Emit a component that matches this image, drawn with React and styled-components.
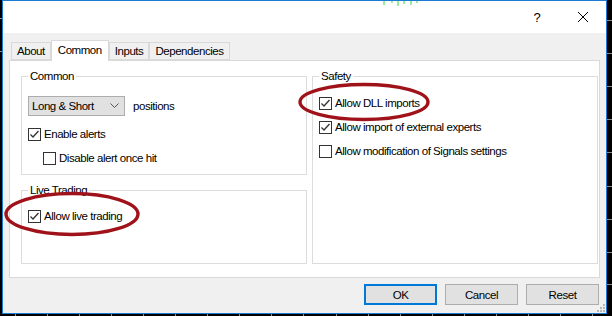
import React from "react";
import styled, { createGlobalStyle } from "styled-components";

const Global = createGlobalStyle`
    html, body {
        margin: 0;
        padding: 0;
        background: #000;
    }
    body {
        font-family: "Liberation Sans", Arial, sans-serif;
        font-size: 11.5px;
        letter-spacing: -0.45px;
        color: #000;
    }
`;

const Screen = styled.div`
    width: 612px;
    height: 316px;
    padding-left: 2px;
    box-sizing: border-box;
    position: relative;
    overflow: hidden;
`;

// chart axis ticks that show round the dialog
const Backdrop = styled.svg`
    position: absolute;
    left: 0;
    top: 0;
`;

const Window = styled.div`
    position: relative;
    width: 605px;
    height: 314px;
    box-sizing: border-box;
    border: 1px solid #1a7ad4;
    background: #f0f0f0;
    display: flex;
    flex-direction: column;
`;

const TitleBar = styled.div`
    height: 32px;
    background: #fff;
    display: flex;
    align-items: center;
    justify-content: flex-end;
    gap: 32px;
    padding-right: 16px;
`;

const TitleButton = styled.div`
    width: 14px;
    height: 14px;
    display: flex;
    align-items: center;
    justify-content: center;
    font-size: 13px;
`;

const Body = styled.div`
    flex: 1;
    display: flex;
    flex-direction: column;
    padding: 7px 6px 0 6px;
`;

const TabStrip = styled.div`
    display: flex;
    align-items: flex-end;
    height: 20px;
    padding-left: 2px;
    position: relative;
    z-index: 1;
`;

const Tab = styled.div`
    box-sizing: border-box;
    height: ${(p) => (p.$active ? "21px" : "18px")};
    margin-bottom: ${(p) => (p.$active ? "-1px" : "0")};
    padding: ${(p) => (p.$active ? "1px 6px 0" : "0 5px")};
    border: 1px solid #d9d9d9;
    border-bottom: ${(p) => (p.$active ? "none" : "1px solid #d9d9d9")};
    background: ${(p) => (p.$active ? "#fff" : "#f0f0f0")};
    display: flex;
    align-items: ${(p) => (p.$active ? "flex-start" : "center")};
    line-height: 16px;
    & + & {
        border-left: ${(p) => (p.$active ? "1px solid #d9d9d9" : "none")};
    }
`;

const Panel = styled.div`
    height: 218px;
    box-sizing: border-box;
    background: #fff;
    border: 1px solid #d9d9d9;
    display: grid;
    grid-template-columns: 286px 286px;
    column-gap: 5px;
    align-content: start;
    padding: 7px 0 0 11px;
`;

const Column = styled.div`
    display: flex;
    flex-direction: column;
    gap: 7px;
`;

const Group = styled.fieldset`
    margin: 0;
    box-sizing: border-box;
    height: ${(p) => p.$h}px;
    border: 1px solid #dcdcdc;
    padding: ${(p) => p.$pt}px 0 0 6px;
    display: flex;
    flex-direction: column;
    gap: 8px;
    min-width: 0;
`;

const Legend = styled.legend`
    padding: 0 2px;
    margin-left: 0;
    line-height: 16px;
`;

const Row = styled.div`
    display: flex;
    align-items: center;
    gap: 8px;
    height: 20px;
    margin-bottom: 2px;
`;

const Select = styled.div`
    width: 97px;
    height: 20px;
    box-sizing: border-box;
    background: #e1e1e1;
    border: 1px solid #adadad;
    display: flex;
    align-items: center;
    justify-content: space-between;
    padding: 0 5px 0 3px;
`;

const CheckLabel = styled.label`
    display: flex;
    align-items: center;
    gap: 3px;
    padding-left: ${(p) => p.$indent || 0}px;
    height: 16px;
`;

const Box = styled.span`
    width: 13px;
    height: 13px;
    box-sizing: border-box;
    border: 1px solid #333;
    background: #fff;
    display: flex;
    align-items: center;
    justify-content: center;
`;

const Footer = styled.div`
    display: flex;
    justify-content: flex-end;
    gap: 8px;
    padding: 6px 1px 0 0;
`;

const Button = styled.button`
    width: 73px;
    height: 21px;
    box-sizing: border-box;
    background: #e1e1e1;
    border: ${(p) => (p.$default ? "2px solid #0078d7" : "1px solid #adadad")};
    font: inherit;
    letter-spacing: inherit;
    color: #000;
    padding: 0;
`;

const Grip = styled.svg`
    position: absolute;
    right: 1px;
    bottom: 1px;
`;

const Marker = styled.svg`
    position: absolute;
    left: 0;
    top: 0;
    pointer-events: none;
`;

const Check = ({ checked, children, indent }) => (
    <CheckLabel $indent={indent}>
        <Box>
            {checked && (
                <svg width="11" height="11" viewBox="0 0 11 11">
                    <path d="M1.5 5.5 L4 8 L9.5 2" fill="none" stroke="#333" strokeWidth="1.3" />
                </svg>
            )}
        </Box>
        {children}
    </CheckLabel>
);

const rightTicks = [20, 53, 86, 119, 152, 186, 219, 252, 284];
const bottomTicks = [15, 47, 79, 111, 143, 175, 207, 239, 271, 303, 336, 368, 400, 432, 464, 496, 528, 560, 592];

export default function App() {
    return (
        <Screen>
            <Global />
            <Backdrop width="612" height="316">
                <g stroke="#8a8a8a" strokeWidth="1">
                    {rightTicks.map((y) => (
                        <path key={y} d={`M607 ${y + 0.5} H612`} />
                    ))}
                    {bottomTicks.map((x) => (
                        <path key={x} d={`M${x + 0.5} 314 V316`} />
                    ))}
                    <path d="M0 18.5 H2 M0 51.5 H2" />
                </g>
            </Backdrop>
            <Window>
                <TitleBar>
                    <TitleButton>?</TitleButton>
                    <TitleButton>
                        <svg width="12" height="12" viewBox="0 0 12 12">
                            <path d="M1 1 L11 11 M11 1 L1 11" stroke="#000" strokeWidth="1" />
                        </svg>
                    </TitleButton>
                </TitleBar>
                <Body>
                    <TabStrip>
                        <Tab>About</Tab>
                        <Tab $active>Common</Tab>
                        <Tab>Inputs</Tab>
                        <Tab>Dependencies</Tab>
                    </TabStrip>
                    <Panel>
                        <Column>
                            <Group $h={107} $pt={12}>
                                <Legend>Common</Legend>
                                <Row>
                                    <Select>
                                        Long &amp; Short
                                        <svg width="9" height="6" viewBox="0 0 9 6">
                                            <path d="M0.5 0.5 L4.5 4.5 L8.5 0.5" fill="none" stroke="#555" />
                                        </svg>
                                    </Select>
                                    positions
                                </Row>
                                <Check checked>Enable alerts</Check>
                                <Check indent={15}>Disable alert once hit</Check>
                            </Group>
                            <Group $h={82} $pt={10}>
                                <Legend>Live Trading</Legend>
                                <Check checked>Allow live trading</Check>
                            </Group>
                        </Column>
                        <Column>
                            <Group $h={196} $pt={11}>
                                <Legend>Safety</Legend>
                                <Check checked>Allow DLL imports</Check>
                                <Check checked>Allow import of external experts</Check>
                                <Check>Allow modification of Signals settings</Check>
                            </Group>
                        </Column>
                    </Panel>
                    <Footer>
                        <Button $default>OK</Button>
                        <Button>Cancel</Button>
                        <Button>Reset</Button>
                    </Footer>
                </Body>
                <Grip width="8" height="8" viewBox="0 0 8 8">
                    <g fill="#b8b8b8">
                        <rect x="6" y="0" width="2" height="2" />
                        <rect x="3" y="3" width="2" height="2" />
                        <rect x="6" y="3" width="2" height="2" />
                        <rect x="0" y="6" width="2" height="2" />
                        <rect x="3" y="6" width="2" height="2" />
                        <rect x="6" y="6" width="2" height="2" />
                    </g>
                </Grip>
                <Marker width="603" height="312" viewBox="3 1 603 312">
                    <ellipse cx="364" cy="102" rx="64" ry="17.5" fill="none" stroke="#a0121a" strokeWidth="3.4" />
                    <ellipse cx="72" cy="214" rx="66" ry="20.5" fill="none" stroke="#a0121a" strokeWidth="3.4" />
                    <g stroke="#33dd33" strokeWidth="1">
                        <path d="M384 0 V5 M392 0 V3 M398 0 V6 M404 0 V4 M411 0 V5 M417 0 V3" />
                    </g>
                </Marker>
            </Window>
        </Screen>
    );
}
